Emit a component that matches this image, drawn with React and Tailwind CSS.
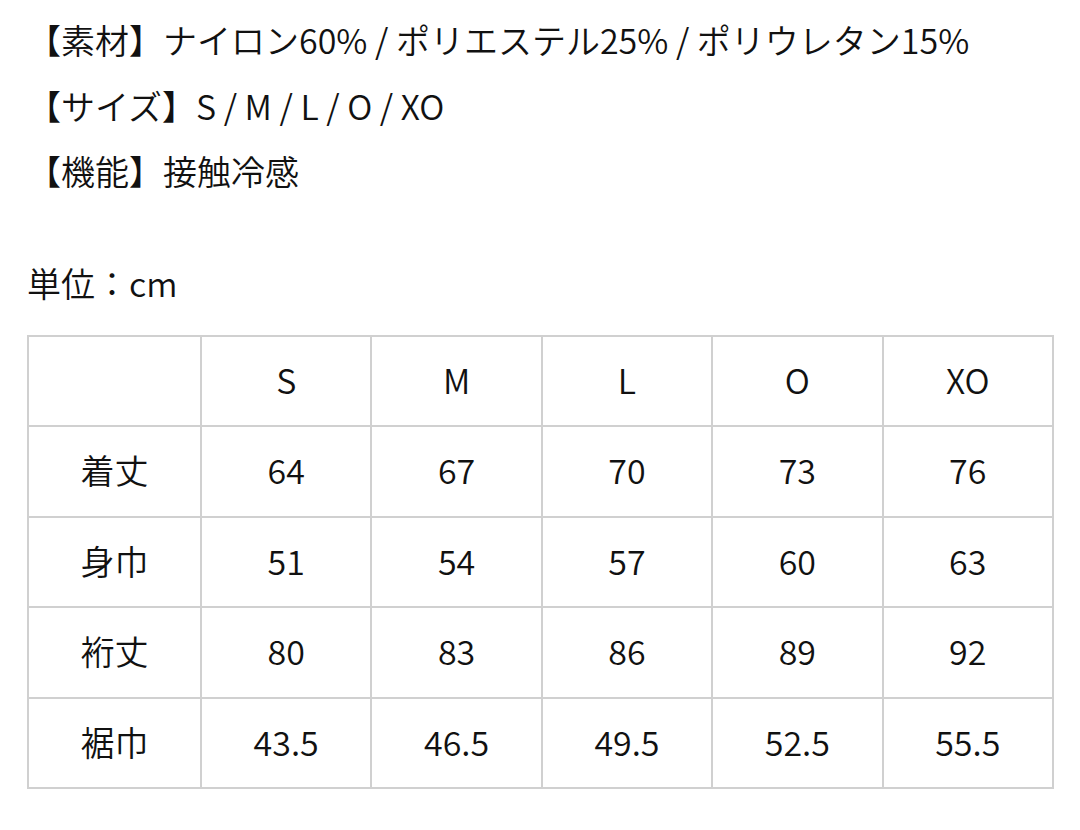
import React from 'react';

const sizes = ['S', 'M', 'L', 'O', 'XO'];
const rows = [
  { label: '着丈', values: ['64', '67', '70', '73', '76'] },
  { label: '身巾', values: ['51', '54', '57', '60', '63'] },
  { label: '裄丈', values: ['80', '83', '86', '89', '92'] },
  { label: '裾巾', values: ['43.5', '46.5', '49.5', '52.5', '55.5'] },
];

const cell = 'border-2 border-[#d0d0d0] pb-[3px] text-center align-middle font-[350]';

export default function App() {
  return (
    <div
      className="min-h-[830px] w-[1080px] bg-white pl-[27px] pt-[7px] text-[34px] font-[350] text-[#111]"
      style={{ fontFamily: '"Noto Sans CJK JP", "Noto Sans", sans-serif' }}
    >
      <div className="leading-[65.5px]">
        <p>【素材】ナイロン60% / ポリエステル25% / ポリウレタン15%</p>
        <p>【サイズ】S / M / L / O / XO</p>
        <p>【機能】接触冷感</p>
      </div>
      <p className="mt-[46px] leading-[65.5px]">単位：cm</p>
      <table className="mt-[20px] w-[1027px] table-fixed border-collapse">
        <colgroup>
          <col className="w-[173px]" />
          {sizes.map((s) => (
            <col key={s} />
          ))}
        </colgroup>
        <thead>
          <tr className="h-[90px]">
            <th className={cell}></th>
            {sizes.map((s) => (
              <th key={s} className={cell}>
                {s}
              </th>
            ))}
          </tr>
        </thead>
        <tbody>
          {rows.map((r) => (
            <tr key={r.label} className="h-[90.5px]">
              <td className={cell}>{r.label}</td>
              {r.values.map((v, i) => (
                <td key={i} className={cell}>
                  {v}
                </td>
              ))}
            </tr>
          ))}
        </tbody>
      </table>
    </div>
  );
}
